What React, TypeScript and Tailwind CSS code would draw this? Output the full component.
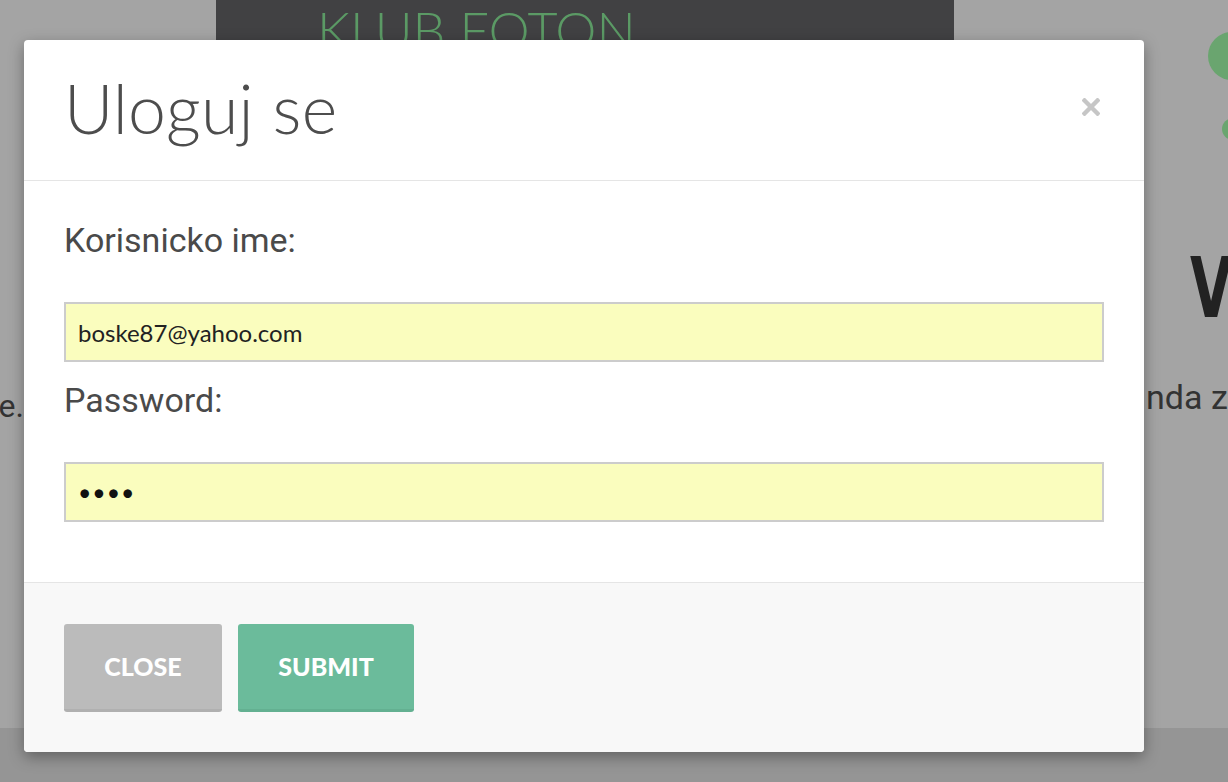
import React from 'react';

const lato = { fontFamily: 'Lato, "Open Sans", sans-serif' };
const roboto = { fontFamily: 'Roboto, sans-serif' };

const App = () => {
  return (
    <div className="relative h-[782px] w-[1228px] overflow-hidden bg-[#a4a4a4]">
      {/* Page behind the dialog (dimmed) */}
      <div className="flex h-[728px]">
        <div className="flex w-[24px] shrink-0 justify-end overflow-hidden pt-[382px]">
          <div className="shrink-0 whitespace-nowrap text-[32px] text-[#333]" style={roboto}>
            usluge.
          </div>
        </div>
        <div className="flex-1 pl-[192px]">
          <div className="flex h-[120px] w-[738px] justify-start bg-[#414143] pl-[101px]">
            <span className="mt-[3px] text-[52px] font-light leading-none text-[#5b9a65]" style={lato}>KLUB FOTON</span>
          </div>
        </div>
        <div className="flex w-[84px] shrink-0 flex-col overflow-hidden">
          <div className="ml-[64px] mt-[32px] h-[48px] w-[48px] rounded-full bg-[#6aa56f]" />
          <div className="ml-[78px] mt-[38px] h-[22px] w-[22px] rounded-full bg-[#6aa56f]" />
          <div className="ml-[46px] mt-[106px] text-[84px] font-bold leading-none text-[#222]" style={{ fontFamily: '"DejaVu Sans Condensed", "DejaVu Sans", sans-serif', transform: 'scaleX(0.72)', transformOrigin: 'left' }}>
            VI
          </div>
          <div className="mt-[42px] whitespace-nowrap pl-[2px] text-[34px] text-[#333]" style={roboto}>
            nda za
          </div>
        </div>
      </div>
      <div className="h-[54px] bg-[#959595]" />

      {/* Modal */}
      <div className="absolute inset-0 pl-[24px] pt-[40px]">
        <div className="w-[1120px] overflow-hidden rounded-[4px] bg-white shadow-[0_5px_15px_rgba(0,0,0,0.35)]">
          <div className="flex h-[141px] items-center justify-between border-b border-[#e5e5e5] pl-[40px] pr-[44px]">
            <h1 className="mt-[-4px] text-[68px] font-light leading-none tracking-[0.2px] text-[#4d4d4d]" style={lato}>Uloguj se</h1>
            <svg width="18" height="18" viewBox="0 0 18 18" className="mt-[-6px]">
              <path d="M2.5 2.5 L15.5 15.5 M15.5 2.5 L2.5 15.5" stroke="#c6c6c6" strokeWidth="4.4" strokeLinecap="square" />
            </svg>
          </div>

          <div className="px-[40px] pb-[42px] pt-[39px]">
            <div className="mb-[18px]">
              <label className="mb-[42px] block h-[40px] text-[34px] leading-[40px] text-[#4a4a4a]" style={roboto}>
                Korisnicko ime:
              </label>
              <input
                readOnly
                value="boske87@yahoo.com"
                className="block h-[60px] w-full border-2 border-[#cccccc] bg-[#fafdbe] px-[12px] text-[24px] text-[#222] outline-none"
                style={lato}
              />
            </div>
            <div className="mb-[18px]">
              <label className="mb-[42px] block h-[40px] text-[34px] leading-[40px] text-[#4a4a4a]" style={roboto}>
                Password:
              </label>
              <input
                readOnly
                type="password"
                value="1234"
                className="block h-[60px] w-full border-2 border-[#cccccc] bg-[#fafdbe] px-[12px] text-[23px] tracking-[1px] text-[#111] outline-none"
                style={lato}
              />
            </div>
          </div>

          <div className="flex gap-4 border-t border-[#e5e5e5] bg-[#f8f8f8] px-[40px] pb-[40px] pt-[41px]">
            <button className="h-[88px] w-[158px] rounded-[3px] border-b-[3px] border-[#b0b0b0] bg-[#bbbbbb] text-[25px] font-black text-white" style={lato}>
              CLOSE
            </button>
            <button className="h-[88px] w-[176px] rounded-[3px] border-b-[3px] border-[#63b091] bg-[#6bbb9b] text-[25px] font-black text-white" style={lato}>
              SUBMIT
            </button>
          </div>
        </div>
      </div>
    </div>
  );
};

export default App;
